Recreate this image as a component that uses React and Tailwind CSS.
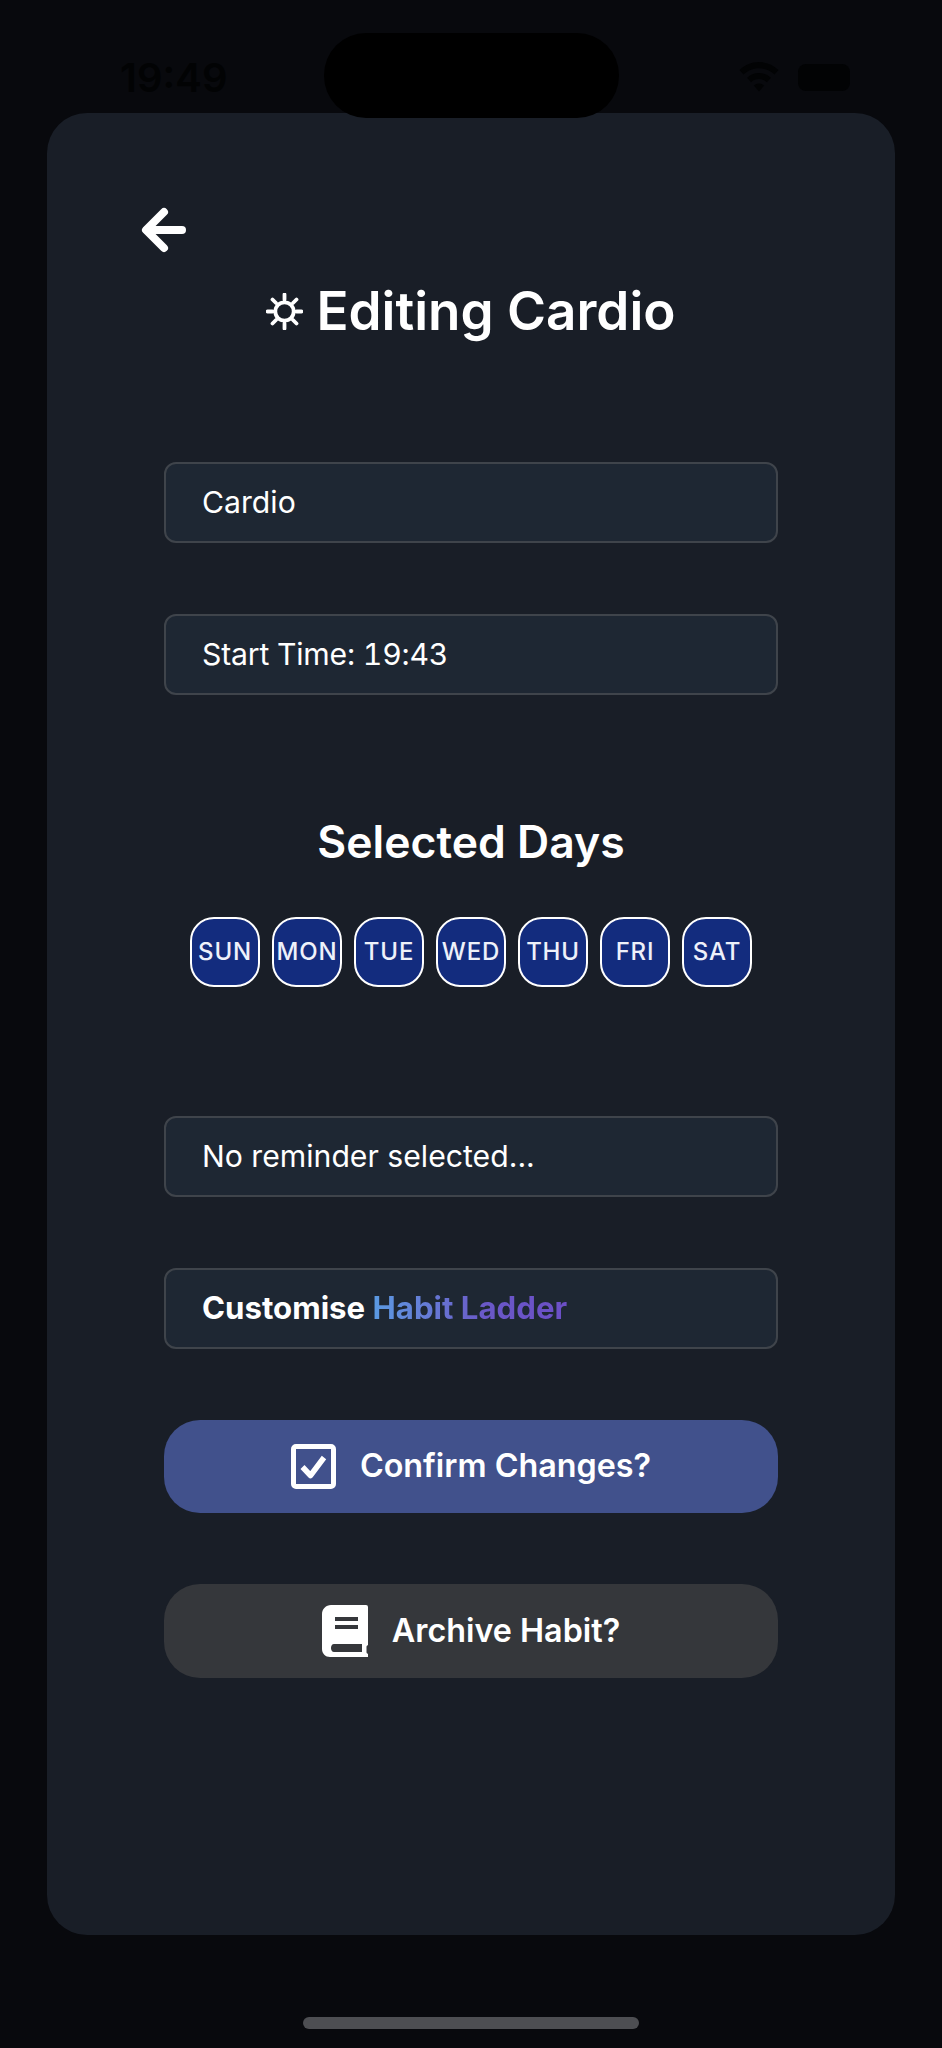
const days = ["SUN", "MON", "TUE", "WED", "THU", "FRI", "SAT"];

function StatusBar() {
  return (
    <div className="relative h-[113px] shrink-0">
      <span className="absolute left-[120px] top-[54px] text-[40px] leading-[48px] font-semibold text-[#020304]">
        19:49
      </span>
      <div className="absolute left-[739px] top-[62px]">
        <svg width="40" height="30" viewBox="0 0 40 30" fill="#020304">
          <path d="M20 0C12.500 0 5.600 3 .500 8l4 4.500C8.500 8.600 14 6.200 20 6.200s11.500 2.400 15.500 6.300l4-4.500C34.400 3 27.500 0 20 0z" />
          <path d="M20 11c-4.600 0-8.800 1.800-11.900 4.800l4 4.500c2-2 4.800-3.200 7.900-3.200s5.900 1.200 7.900 3.200l4-4.500C28.800 12.800 24.600 11 20 11z" />
          <path d="M20 21.500c-2 0-3.800.8-5.100 2.100L20 29.500l5.100-5.900c-1.300-1.300-3.100-2.100-5.100-2.100z" />
        </svg>
      </div>
      <div className="absolute left-[798px] top-[64px] h-[27px] w-[52px] rounded-[8px] bg-[#020304]" />
    </div>
  );
}

function BackArrow() {
  return (
    <svg width="46" height="46" viewBox="0 0 46 46" fill="none" stroke="#ffffff" strokeWidth="8" strokeLinecap="round" strokeLinejoin="round">
      <path d="M41 23H6" />
      <path d="M23 5L5 23l18 18" />
    </svg>
  );
}

function Sun() {
  return (
    <svg width="37" height="37" viewBox="0 0 37 37" fill="none" stroke="#ffffff" strokeWidth="3.800" strokeLinecap="round">
      <circle cx="18.500" cy="18.500" r="9.200" />
      <path d="M18.500 1.500v5M18.500 30.500v5M1.500 18.500h5M30.500 18.500h5M6.500 6.500l3.500 3.500M27 27l3.500 3.500M6.500 30.500L10 27M27 10l3.500-3.500" />
    </svg>
  );
}

function CheckBox() {
  return (
    <svg width="45" height="45" viewBox="0 0 45 45" fill="none">
      <rect x="2.500" y="2.500" width="40" height="40" rx="2.500" stroke="#ffffff" strokeWidth="5" />
      <path d="M11.500 23l8 8.500L33 13.500" stroke="#ffffff" strokeWidth="5.500" strokeLinejoin="round" />
    </svg>
  );
}

function Book() {
  return (
    <svg width="46" height="52" viewBox="0 0 46 52" fill="none">
      <path
        fill="#ffffff"
        fillRule="evenodd"
        d="M9 0h35a2 2 0 0 1 2 2v38c-1 .5-1.500 1-1.500 2v5c0 1 .5 1.500 1.500 2v3H8c-4.500 0-8-3.500-8-8V9c0-5 4-9 9-9zM13 12v4h23v-4zM13 20v4h23v-4zM12 39c-4 0-4 8 0 8h28v-8z"
      />
    </svg>
  );
}

function Field({ children }) {
  return (
    <div className="flex h-[81px] items-center rounded-[12px] border-2 border-[#3f444b] bg-[#1e2733] pl-[36px] text-[30.2px] text-white">
      {children}
    </div>
  );
}

export default function App() {
  return (
    <div className="relative flex h-[2048px] flex-col overflow-hidden bg-[#08090d] font-['Inter',sans-serif]">
      <StatusBar />
      <div className="absolute left-[324px] top-[33px] z-10 h-[85px] w-[295px] rounded-[42px] bg-black" />

      <div className="mx-[47px] flex h-[1822px] flex-col rounded-[40px] bg-[#191e27] px-[117px]">
        <div className="mt-[94px] -ml-[23px]">
          <BackArrow />
        </div>
        <div className="mt-[26px] flex h-[64px] items-center justify-center gap-[13px] text-[53px] leading-[64px] font-semibold text-white">
          <Sun />
          <span>Editing Cardio</span>
        </div>

        <div className="mt-[119px] flex flex-col gap-[71px]">
          <Field>Cardio</Field>
          <Field>
            <span className="tracking-[-0.2px] tabular-nums">Start Time: 19:43</span>
          </Field>
        </div>

        <h2 className="mt-[120px] text-center text-[44.5px] leading-[54px] font-semibold text-white">
          Selected Days
        </h2>
        <div className="mt-[48px] flex justify-center gap-[12px]">
          {days.map((d) => (
            <div
              key={d}
              className="flex h-[70px] w-[70px] items-center justify-center rounded-[24px] border-2 border-white bg-[#132c7e] text-[24px] font-medium tracking-[0.8px] text-[#eef1fa]"
            >
              {d}
            </div>
          ))}
        </div>

        <div className="mt-[129px] flex flex-col gap-[71px]">
          <Field>No reminder selected...</Field>
          <Field>
            <span className="text-[31.2px] font-bold">Customise&nbsp;</span>
            <span className="bg-gradient-to-r from-[#5a9ae2] via-[#6a58c8] via-[58%] to-[#6c4fc6] bg-clip-text text-[31.2px] font-bold text-transparent">
              Habit Ladder
            </span>
          </Field>
        </div>

        <button className="mt-[71px] flex h-[93px] items-center justify-center gap-[24px] rounded-[36px] bg-[#41518c] text-[32.3px] font-semibold text-white">
          <CheckBox />
          <span>Confirm Changes?</span>
        </button>
        <button className="mt-[71px] flex h-[94px] items-center justify-center gap-[24px] rounded-[36px] bg-[#35373b] text-[32.3px] font-semibold text-white">
          <Book />
          <span>Archive Habit?</span>
        </button>
      </div>

      <div className="mx-auto mt-[82px] h-[12px] w-[336px] rounded-full bg-[#4d4e52]" />
    </div>
  );
}
